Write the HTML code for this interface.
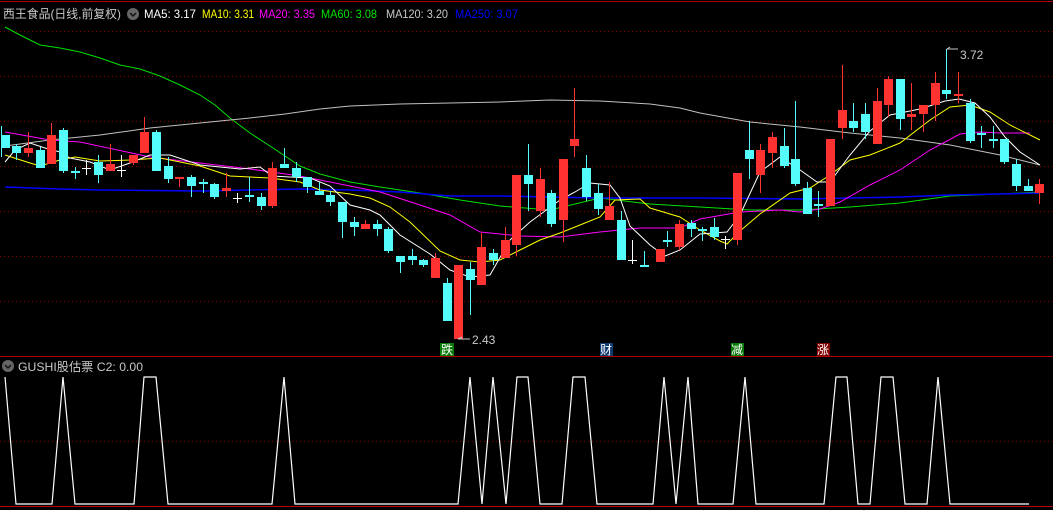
<!DOCTYPE html>
<html><head><meta charset="utf-8"><style>
html,body{margin:0;padding:0;background:#000;width:1053px;height:510px;overflow:hidden}
svg{display:block}
text{font-family:"Liberation Sans","Noto Sans CJK SC",sans-serif;font-size:12px}
</style></head><body>
<svg width="1053" height="510" viewBox="0 0 1053 510" xmlns="http://www.w3.org/2000/svg">
<rect width="1053" height="510" fill="#000"/>
<g stroke="#8a0000" stroke-width="1" stroke-dasharray="1,3">
<path d="M0 31.5H1053M0 76.5H1053M0 121.5H1053M0 166.5H1053M0 211.5H1053M0 256.5H1053M0 301.5H1053M0 441.5H1053"/>
</g>
<path d="M0 1.5H1053M0 356.5H1053M0 506.5H1053" stroke="#b00000" stroke-width="1"/>
<polyline fill="none" stroke="#00e000" stroke-width="1" points="5,27 20,35 40,45 60,48 80,52 100,58 120,65 140,69 160,76 180,85 200,95 215,105 230,118 250,133 270,146 285,156 300,166 320,174 350,182 380,187 420,193 460,200 500,206 550,210 600,198 650,204 700,207 750,210 800,210 850,207 900,203 950,196 1000,194 1040,192"/>
<polyline fill="none" stroke="#c0c0c0" stroke-width="1" points="5,146 50,140 100,135 150,128 200,123 250,118 285,114 320,109 350,106 400,104 450,103 500,102 550,100 600,101 650,104 680,108 700,113 750,122 800,127 850,133 900,138 950,145 1000,155 1040,165"/>
<polyline fill="none" stroke="#0000ff" stroke-width="1.5" points="5,187 60,189 100,190 200,191 300,189 350,190 400,192 450,196 500,196 600,198 700,198 800,199 850,198 900,197 950,195 1000,194 1040,193"/>
<polyline fill="none" stroke="#ff00ff" stroke-width="1" points="5,132 50,140 80,142 150,157 200,163 250,169 300,176 350,186 380,192 420,205 450,215 480,232 520,236 560,237 600,232 640,228 680,228 700,219 740,212 780,210 800,212 820,209 840,202 870,185 900,170 930,150 960,134 980,132 1000,133 1030,133"/>
<polyline fill="none" stroke="#ffff00" stroke-width="1" points="5,155 30,163 40,166 60,160 75,157 100,161 130,160 160,158 200,166 230,176 270,178 300,182 320,190 350,194 370,198 390,207 410,222 440,251 460,260 480,262 500,260 520,250 540,240 560,233 580,225 600,217 615,200 640,199 650,208 680,217 700,230 720,241 727,244 740,231 760,214 790,193 810,188 830,175 850,160 870,155 900,143 930,120 950,107 970,105 990,112 1010,125 1040,140"/>
<polyline fill="none" stroke="#ffffff" stroke-width="1" points="5,162 15,150 30,143 45,148 60,152 70,158 90,162 110,170 130,163 150,155 170,155 200,165 220,167 240,169 260,167 272,176 290,177 310,178 330,186 350,205 370,210 380,215 400,235 430,254 450,270 470,277 490,275 510,240 530,222 560,200 575,192 590,183 600,184 610,185 620,198 630,226 650,245 665,256 680,250 700,234 727,232 740,215 760,172 780,157 800,170 817,182 830,182 850,155 870,131 890,115 905,112 920,109 945,101 959,99 975,103 990,117 1005,137 1020,152 1040,165"/>
<g fill="#54fcfc">
<rect x="1" y="126" width="1" height="31"/><rect x="1" y="135" width="9" height="13"/>
<rect x="16" y="144" width="1" height="16"/><rect x="12" y="146" width="9" height="7"/>
<rect x="40" y="147" width="1" height="21"/><rect x="36" y="150" width="9" height="18"/>
<rect x="63" y="128" width="1" height="45"/><rect x="59" y="130" width="9" height="41"/>
<rect x="75" y="167" width="1" height="12"/><rect x="71" y="171" width="9" height="2"/>
<rect x="98" y="155" width="1" height="28"/><rect x="94" y="162" width="9" height="13"/>
<rect x="156" y="130" width="1" height="41"/><rect x="152" y="132" width="9" height="39"/>
<rect x="168" y="157" width="1" height="26"/><rect x="164" y="166" width="9" height="13"/>
<rect x="191" y="175" width="1" height="22"/><rect x="187" y="177" width="9" height="9"/>
<rect x="203" y="179" width="1" height="14"/><rect x="199" y="182" width="9" height="2"/>
<rect x="214" y="183" width="1" height="16"/><rect x="210" y="184" width="9" height="13"/>
<rect x="249" y="177" width="1" height="25"/><rect x="245" y="195" width="9" height="2"/>
<rect x="261" y="193" width="1" height="17"/><rect x="257" y="197" width="9" height="9"/>
<rect x="284" y="148" width="1" height="20"/><rect x="280" y="164" width="9" height="4"/>
<rect x="296" y="162" width="1" height="20"/><rect x="292" y="168" width="9" height="9"/>
<rect x="307" y="177" width="1" height="16"/><rect x="303" y="177" width="9" height="10"/>
<rect x="319" y="182" width="1" height="13"/><rect x="315" y="191" width="9" height="4"/>
<rect x="330" y="191" width="1" height="15"/><rect x="326" y="195" width="9" height="7"/>
<rect x="342" y="202" width="1" height="36"/><rect x="338" y="202" width="9" height="20"/>
<rect x="354" y="217" width="1" height="19"/><rect x="350" y="222" width="9" height="5"/>
<rect x="377" y="220" width="1" height="16"/><rect x="373" y="224" width="9" height="5"/>
<rect x="388" y="227" width="1" height="26"/><rect x="384" y="229" width="9" height="22"/>
<rect x="400" y="256" width="1" height="17"/><rect x="396" y="256" width="9" height="6"/>
<rect x="412" y="249" width="1" height="16"/><rect x="408" y="256" width="9" height="4"/>
<rect x="423" y="259" width="1" height="8"/><rect x="419" y="260" width="9" height="5"/>
<rect x="447" y="278" width="1" height="43"/><rect x="443" y="283" width="9" height="38"/>
<rect x="470" y="262" width="1" height="53"/><rect x="466" y="269" width="9" height="11"/>
<rect x="493" y="249" width="1" height="16"/><rect x="489" y="253" width="9" height="7"/>
<rect x="528" y="144" width="1" height="67"/><rect x="524" y="175" width="9" height="9"/>
<rect x="551" y="190" width="1" height="37"/><rect x="547" y="193" width="9" height="31"/>
<rect x="586" y="155" width="1" height="46"/><rect x="582" y="168" width="9" height="29"/>
<rect x="598" y="184" width="1" height="31"/><rect x="594" y="193" width="9" height="16"/>
<rect x="621" y="211" width="1" height="49"/><rect x="617" y="220" width="9" height="40"/>
<rect x="644" y="251" width="1" height="16"/><rect x="640" y="265" width="9" height="2"/>
<rect x="667" y="231" width="1" height="16"/><rect x="663" y="240" width="9" height="2"/>
<rect x="691" y="220" width="1" height="17"/><rect x="687" y="223" width="9" height="6"/>
<rect x="702" y="227" width="1" height="14"/><rect x="698" y="229" width="9" height="2"/>
<rect x="714" y="218" width="1" height="22"/><rect x="710" y="227" width="9" height="10"/>
<rect x="749" y="121" width="1" height="58"/><rect x="745" y="150" width="9" height="9"/>
<rect x="784" y="128" width="1" height="40"/><rect x="780" y="146" width="9" height="20"/>
<rect x="795" y="101" width="1" height="85"/><rect x="791" y="159" width="9" height="25"/>
<rect x="807" y="182" width="1" height="32"/><rect x="803" y="188" width="9" height="26"/>
<rect x="818" y="191" width="1" height="26"/><rect x="814" y="204" width="9" height="2"/>
<rect x="853" y="103" width="1" height="29"/><rect x="849" y="121" width="9" height="7"/>
<rect x="865" y="103" width="1" height="36"/><rect x="861" y="114" width="9" height="18"/>
<rect x="900" y="79" width="1" height="51"/><rect x="896" y="79" width="9" height="40"/>
<rect x="946" y="49" width="1" height="50"/><rect x="942" y="90" width="9" height="4"/>
<rect x="970" y="99" width="1" height="44"/><rect x="966" y="103" width="9" height="38"/>
<rect x="981" y="126" width="1" height="22"/><rect x="977" y="133" width="9" height="2"/>
<rect x="993" y="126" width="1" height="22"/><rect x="989" y="139" width="9" height="2"/>
<rect x="1004" y="139" width="1" height="25"/><rect x="1000" y="139" width="9" height="23"/>
<rect x="1016" y="159" width="1" height="32"/><rect x="1012" y="164" width="9" height="22"/>
<rect x="1028" y="179" width="1" height="12"/><rect x="1024" y="186" width="9" height="5"/>
</g>
<g fill="#ff3232">
<rect x="28" y="132" width="1" height="25"/><rect x="24" y="148" width="9" height="5"/>
<rect x="51" y="123" width="1" height="41"/><rect x="47" y="135" width="9" height="29"/>
<rect x="110" y="144" width="1" height="27"/><rect x="106" y="164" width="9" height="7"/>
<rect x="133" y="155" width="1" height="10"/><rect x="129" y="155" width="9" height="8"/>
<rect x="144" y="117" width="1" height="36"/><rect x="140" y="132" width="9" height="21"/>
<rect x="179" y="177" width="1" height="10"/><rect x="175" y="177" width="9" height="2"/>
<rect x="226" y="173" width="1" height="24"/><rect x="222" y="188" width="9" height="3"/>
<rect x="272" y="162" width="1" height="46"/><rect x="268" y="168" width="9" height="38"/>
<rect x="365" y="220" width="1" height="9"/><rect x="361" y="224" width="9" height="5"/>
<rect x="435" y="253" width="1" height="25"/><rect x="431" y="258" width="9" height="20"/>
<rect x="454" y="265" width="9" height="74"/>
<rect x="481" y="233" width="1" height="52"/><rect x="477" y="247" width="9" height="38"/>
<rect x="505" y="227" width="1" height="31"/><rect x="501" y="240" width="9" height="18"/>
<rect x="516" y="175" width="1" height="81"/><rect x="512" y="175" width="9" height="70"/>
<rect x="540" y="168" width="1" height="49"/><rect x="536" y="179" width="9" height="32"/>
<rect x="563" y="159" width="1" height="83"/><rect x="559" y="159" width="9" height="61"/>
<rect x="574" y="88" width="1" height="69"/><rect x="570" y="139" width="9" height="7"/>
<rect x="609" y="182" width="1" height="38"/><rect x="605" y="206" width="9" height="14"/>
<rect x="656" y="249" width="9" height="13"/>
<rect x="679" y="220" width="1" height="30"/><rect x="675" y="224" width="9" height="23"/>
<rect x="737" y="173" width="1" height="72"/><rect x="733" y="173" width="9" height="67"/>
<rect x="760" y="144" width="1" height="49"/><rect x="756" y="150" width="9" height="25"/>
<rect x="772" y="132" width="1" height="36"/><rect x="768" y="137" width="9" height="16"/>
<rect x="826" y="139" width="9" height="67"/>
<rect x="842" y="65" width="1" height="74"/><rect x="838" y="110" width="9" height="18"/>
<rect x="877" y="88" width="1" height="56"/><rect x="873" y="101" width="9" height="43"/>
<rect x="888" y="76" width="1" height="41"/><rect x="884" y="79" width="9" height="26"/>
<rect x="911" y="83" width="1" height="47"/><rect x="907" y="114" width="9" height="3"/>
<rect x="923" y="105" width="1" height="27"/><rect x="919" y="105" width="9" height="9"/>
<rect x="935" y="72" width="1" height="49"/><rect x="931" y="83" width="9" height="22"/>
<rect x="958" y="72" width="1" height="31"/><rect x="954" y="94" width="9" height="2"/>
<rect x="1039" y="179" width="1" height="25"/><rect x="1035" y="184" width="9" height="9"/>
</g>
<g fill="#fff">
<rect x="86" y="160" width="1" height="15"/><rect x="82" y="168" width="9" height="1"/>
<rect x="121" y="155" width="1" height="22"/><rect x="117" y="170" width="9" height="1"/>
<rect x="237" y="193" width="1" height="10"/><rect x="233" y="198" width="9" height="1"/>
<rect x="632" y="240" width="1" height="24"/><rect x="628" y="260" width="9" height="1"/>
<rect x="725" y="236" width="1" height="13"/><rect x="721" y="239" width="9" height="1"/>
</g>
<path d="M458 339H470M458 339l4-2M947 49H958M947 49l3-2" stroke="#c8c8c8" fill="none"/>
<text x="472" y="344" fill="#c8c8c8">2.43</text>
<text x="960" y="59" fill="#c8c8c8">3.72</text>
<rect x="440" y="343" width="14" height="13" fill="#0a7a0a"/><text x="441" y="354" fill="#fff">跌</text>
<rect x="600" y="343" width="13" height="13" fill="#0e3a70"/><text x="600" y="354" fill="#fff">财</text>
<rect x="731" y="343" width="13" height="13" fill="#0a7a0a"/><text x="731" y="354" fill="#fff">减</text>
<rect x="817" y="343" width="13" height="13" fill="#800000"/><text x="817" y="354" fill="#fff">涨</text>
<text x="3" y="18" fill="#c8c8c8" textLength="118" lengthAdjust="spacingAndGlyphs">西王食品(日线,前复权)</text>
<circle cx="133" cy="14" r="6" fill="#666"/><path d="M130 13l3 3 3-3" stroke="#111" fill="none" stroke-width="1.5"/>
<text x="144" y="18" fill="#fff" textLength="52" lengthAdjust="spacingAndGlyphs">MA5: 3.17</text>
<text x="202" y="18" fill="#ffff00" textLength="52" lengthAdjust="spacingAndGlyphs">MA10: 3.31</text>
<text x="259" y="18" fill="#ff00ff" textLength="56" lengthAdjust="spacingAndGlyphs">MA20: 3.35</text>
<text x="321" y="18" fill="#00e000" textLength="56" lengthAdjust="spacingAndGlyphs">MA60: 3.08</text>
<text x="386" y="18" fill="#c8c8c8" textLength="62" lengthAdjust="spacingAndGlyphs">MA120: 3.20</text>
<text x="455" y="18" fill="#0000ff" textLength="63" lengthAdjust="spacingAndGlyphs">MA250: 3.07</text>
<circle cx="8" cy="366" r="6" fill="#666"/><path d="M5 365l3 3 3-3" stroke="#111" fill="none" stroke-width="1.5"/>
<text x="18" y="371" fill="#c8c8c8" textLength="125" lengthAdjust="spacingAndGlyphs">GUSHI股估票  C2: 0.00</text>
<polyline fill="none" stroke="#fff" stroke-width="1.2" points="5,377 16,504 52,504 63,377 75,504 134,504 144,377 156,377 168,504 272,504 284,377 295,504 458,504 470,377 482,504 493,377 506,504 517,377 528,377 540,504 562,504 573,377 585,377 597,504 653,504 664,377 676,504 688,377 698,504 733,504 745,377 756,504 824,504 836,377 847,377 858,504 870,504 881,377 893,377 905,504 927,504 938,377 950,504 1029,504"/>
</svg>
</body></html>
